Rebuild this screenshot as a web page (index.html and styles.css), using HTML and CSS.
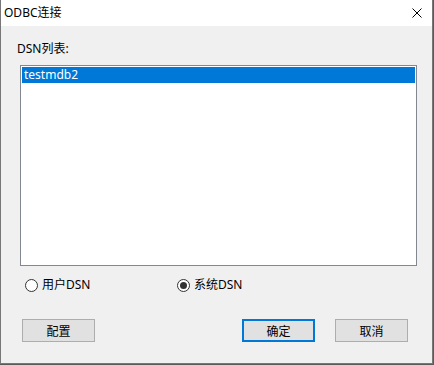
FILE: index.html
```html
<!DOCTYPE html>
<html>
<head>
<meta charset="utf-8">
<link rel="stylesheet" href="styles.css">
</head>
<body>
<div class="window">
  <div class="titlebar">
    <span class="title">ODBC连接</span>
    <svg class="close" width="10" height="10" viewBox="0 0 10 10"><path d="M0.5 0.5L9.5 9.5M9.5 0.5L0.5 9.5" stroke="#000" stroke-width="1"/></svg>
  </div>
  <div class="content">
    <div class="label">DSN列表:</div>
    <div class="listbox">
      <div class="item selected">testmdb2</div>
    </div>
    <div class="radios">
      <label class="radio r1"><span class="circle"></span>用户DSN</label>
      <label class="radio r2"><span class="circle checked"></span>系统DSN</label>
    </div>
    <div class="buttons">
      <div class="btn">配置</div>
      <div class="spacer"></div>
      <div class="btn default">确定</div>
      <div class="btn">取消</div>
    </div>
  </div>
</div>
</body>
</html>
```
FILE: styles.css
```css
html { background: #5a5a5a; }
body {
  margin: 0;
  font-family: "Noto Sans", "Noto Sans CJK SC", sans-serif;
  font-size: 12px;
  color: #000;
}
.window {
  width: 431px;
  height: 363px;
  border: 1px solid #777;
  border-top: none;
  background: #f0f0f0;
  display: flex;
  flex-direction: column;
}
.titlebar {
  height: 26px;
  background: #fff;
  display: flex;
  align-items: center;
  padding-left: 3px;
  padding-right: 10px;
}
.title { flex: 1; line-height: 16px; margin-top: -1px; }
.close { display: block; margin-top: -1px; }
.content {
  padding: 15px 0 0 16px;
  display: flex;
  flex-direction: column;
}
.label { line-height: 16px; }
.listbox {
  margin: 8px 0 0 3px;
  width: 395px;
  height: 199px;
  border: 1px solid #828790;
  background: #fff;
  padding: 0;
}
.item {
  margin: 1px;
  height: 16px;
  line-height: 16px;
  padding-left: 2px;
}
.selected { background: #0078d7; color: #fff; }
.radios {
  display: flex;
  margin-top: 11px;
  height: 16px;
  align-items: center;
}
.radio { display: flex; align-items: center; gap: 4px; line-height: 16px; }
.r1 { margin-left: 8px; width: 152px; }
.circle {
  box-sizing: border-box;
  width: 13px;
  height: 13px;
  border: 1px solid #333;
  border-radius: 50%;
  background: #fff;
  display: flex;
  align-items: center;
  justify-content: center;
}
.checked::after {
  content: "";
  width: 7px;
  height: 7px;
  border-radius: 50%;
  background: #333;
}
.buttons {
  display: flex;
  margin-top: 26px;
  margin-left: 5px;
  width: 386px;
  gap: 20px;
}
.spacer { flex: 1; }
.btn {
  box-sizing: border-box;
  width: 73px;
  height: 23px;
  border: 1px solid #adadad;
  background: #e1e1e1;
  display: flex;
  align-items: center;
  justify-content: center;
}
.buttons .spacer { margin-left: -20px; }
.default { border: 2px solid #0078d7; }
```
